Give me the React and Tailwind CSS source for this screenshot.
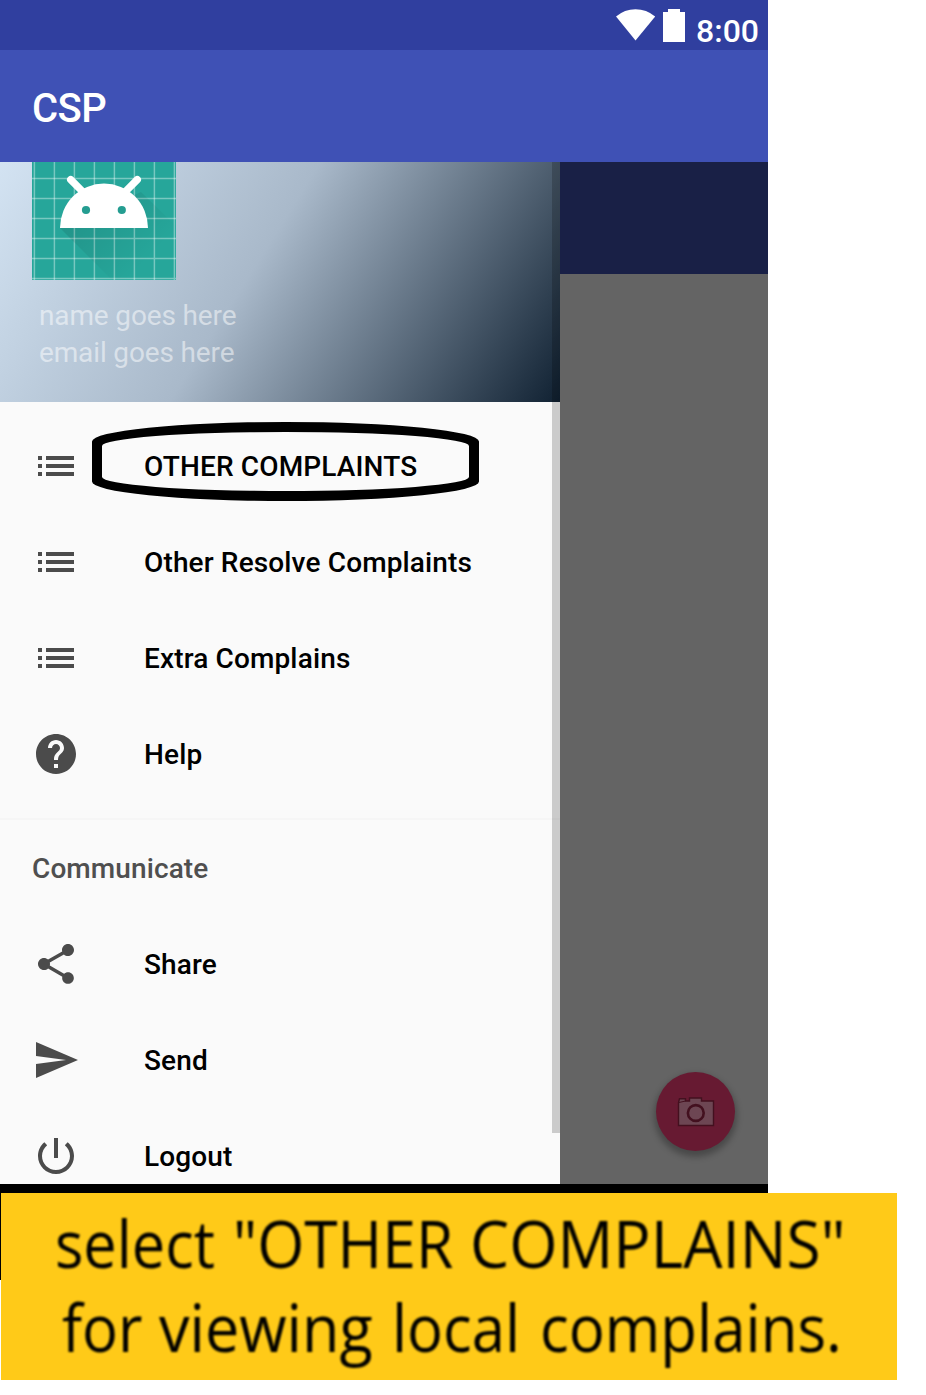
import React from "react";

const ICONS = {
  list: "M3 13h2v-2H3v2zm0 4h2v-2H3v2zm0-8h2V7H3v2zm4 4h14v-2H7v2zm0 4h14v-2H7v2zM7 7v2h14V7H7z",
  help: "M12 2C6.48 2 2 6.48 2 12s4.48 10 10 10 10-4.48 10-10S17.52 2 12 2zm1 17h-2v-2h2v2zm2.07-7.75l-.9.92C13.45 12.9 13 13.5 13 15h-2v-.5c0-1.1.45-2.1 1.17-2.83l1.24-1.26c.37-.36.59-.86.59-1.41 0-1.1-.9-2-2-2s-2 .9-2 2H8c0-2.21 1.79-4 4-4s4 1.79 4 4c0 .88-.36 1.68-.93 2.25z",
  share: "M18 16.08c-.76 0-1.44.3-1.96.77L8.91 12.7c.05-.23.09-.46.09-.7s-.04-.47-.09-.7l7.05-4.11c.54.5 1.25.81 2.04.81 1.66 0 3-1.34 3-3s-1.34-3-3-3-3 1.34-3 3c0 .24.04.47.09.7L8.04 9.81C7.5 9.31 6.79 9 6 9c-1.66 0-3 1.34-3 3s1.34 3 3 3c.79 0 1.5-.31 2.04-.81l7.12 4.16c-.05.21-.08.43-.08.65 0 1.61 1.31 2.92 2.92 2.92 1.61 0 2.92-1.31 2.92-2.92s-1.31-2.92-2.92-2.92z",
  send: "M2.01 21L23 12 2.01 3 2 10l15 2-15 2z",
  power: "M13 3h-2v10h2V3zm4.83 2.17l-1.42 1.42C17.99 7.86 19 9.81 19 12c0 3.87-3.13 7-7 7s-7-3.13-7-7c0-2.19 1.01-4.14 2.58-5.42L6.17 5.17C4.23 6.82 3 9.26 3 12c0 4.97 4.03 9 9 9s9-4.03 9-9c0-2.74-1.23-5.18-3.17-6.83z",
};

function MenuItem({ icon, label, highlighted }) {
  return (
    <li className="relative flex h-24 shrink-0 items-center gap-16 pl-8">
      <svg viewBox="0 0 24 24" className="size-12 fill-[#4b4b4b]">
        <path d={ICONS[icon]} />
      </svg>
      <span className="pt-0.5 text-[28px] leading-8 font-medium tracking-[0.14px] whitespace-nowrap text-black">
        {label}
      </span>
      {highlighted && (
        <svg viewBox="92 422 387 79" className="absolute top-1 left-[92px] h-[79px] w-[387px]">
          <path
            fillRule="evenodd"
            d="M92 441.5A193.5 19.5 0 0 1 479 441.5V481.5A193.5 19.5 0 0 1 92 481.5ZM102 446A183.5 14 0 0 1 469 446V477A183.5 14 0 0 1 102 477Z"
          />
        </svg>
      )}
    </li>
  );
}

function LauncherIcon() {
  const lines = [2.4, 22.4, 42.4, 62.4, 82.4, 102.4, 122.4, 142.4];
  return (
    <svg viewBox="0 0 144 144" className="block size-36">
      <defs>
        <linearGradient id="castShadow" gradientUnits="userSpaceOnUse" x1="50" y1="80" x2="105" y2="135">
          <stop offset="0" stopColor="#000" stopOpacity="0.1" />
          <stop offset="1" stopColor="#000" stopOpacity="0" />
        </linearGradient>
      </defs>
      <rect width="144" height="144" fill="#26a69a" />
      {lines.map((p) => (
        <path key={p} d={`M${p} 0V144M0 ${p}H144`} stroke="#fff" strokeOpacity="0.38" strokeWidth="1.5" />
      ))}
      <path d="M28 92L80 144H144V90L109 56Z" fill="url(#castShadow)" />
      <path d="M28 92A44 44.5 0 0 1 116 92Z" fill="#fff" />
      <path d="M38.700 43.700L52 57M105.300 43.700L92 57" stroke="#fff" strokeWidth="7.4" strokeLinecap="round" />
      <circle cx="54" cy="74" r="4.1" fill="#249d91" />
      <circle cx="89.800" cy="74" r="4.1" fill="#249d91" />
    </svg>
  );
}

function StatusBar() {
  return (
    <div className="flex h-[50px] items-start justify-end bg-[#303f9f] pr-[9px]">
      <svg viewBox="0 0 40 32" className="mt-[9px] mr-[7px] h-8 w-10 fill-white">
        <path d="M0 7.500Q8.500 0.200 19.500 0.200T39.200 7.500L19.500 31.500Z" />
      </svg>
      <svg viewBox="0 0 22 33" className="mt-[9px] mr-[11px] h-[33px] w-[22px] fill-white">
        <path d="M5 0H17V3H22V33H0V3H5Z" />
      </svg>
      <span className="mt-[11px] text-[32px] leading-10 font-medium text-white">8:00</span>
    </div>
  );
}

function Drawer() {
  return (
    <nav className="relative flex h-full w-[560px] flex-col overflow-hidden bg-[#fafafa]">
      <header className="flex h-60 shrink-0 flex-col overflow-hidden bg-[linear-gradient(122.15deg,#dcecfb_0%,#a9b9ca_50%,#102132_100%)] bg-[length:560px_352px] bg-bottom pl-8">
        <div className="-mt-[26px]">
          <LauncherIcon />
        </div>
        <div className="mt-[17px] pl-[7px] text-[28px] leading-[37px] tracking-[-0.14px] text-white/50">
          <p>name goes here</p>
          <p>email goes here</p>
        </div>
      </header>
      <ul className="flex shrink-0 flex-col py-4">
        <MenuItem icon="list" label="OTHER COMPLAINTS" highlighted />
        <MenuItem icon="list" label="Other Resolve Complaints" />
        <MenuItem icon="list" label="Extra Complains" />
        <MenuItem icon="help" label="Help" />
      </ul>
      <div className="h-0.5 shrink-0 bg-[#f6f6f6]" />
      <h2 className="flex h-24 shrink-0 items-center pt-0.5 pl-8 text-[28px] font-medium tracking-[0.1px] text-[#4f4f4f]">
        Communicate
      </h2>
      <ul className="flex shrink-0 flex-col">
        <MenuItem icon="share" label="Share" />
        <MenuItem icon="send" label="Send" />
        <MenuItem icon="power" label="Logout" />
      </ul>
      <div className="absolute top-0 right-0 h-[971px] w-2 bg-black/[0.19]" />
    </nav>
  );
}

function DimmedContent() {
  return (
    <div className="flex h-full w-52 flex-col bg-[#646464]">
      <div className="h-28 bg-[#192046]" />
      <div className="flex flex-1 items-end justify-end pr-[33px] pb-[33px]">
        <button className="flex size-[79px] items-center justify-center rounded-full bg-[#671a32] shadow-[0_4px_6px_2px_rgba(0,0,0,0.28)]">
          <svg viewBox="0 0 38 30" className="h-[30px] w-[38px] fill-[#6d4653] stroke-[#43101f]">
            <path d="M1.500 5.500L2.500 1.800H8.500V4H12.500V1H24.500V4H36.500V28.500H1.500Z" strokeWidth="1.4" />
            <path d="M2 5.500L8.500 4" strokeWidth="1" />
            <circle cx="18.800" cy="16" r="7.900" strokeWidth="2.600" />
          </svg>
        </button>
      </div>
    </div>
  );
}

function Caption() {
  return (
    <div className="h-[187px] w-[896px] overflow-hidden bg-[#ffca18] pt-[9px] font-['Open_Sans',sans-serif] text-[65px] leading-[83px] whitespace-nowrap text-black">
      <p className="flex pl-[54px] blur-[0.8px]">
        <span className="w-[178px] origin-left scale-x-[0.915]">select </span>
        <span className="w-[237px] origin-left scale-x-[0.932]">"OTHER </span>
        <span className="origin-left scale-x-[0.956]">COMPLAINS"</span>
      </p>
      <p className="mt-px flex pl-[61px] blur-[0.8px]">
        <span className="w-[97px] origin-left scale-x-[0.92]">for </span>
        <span className="w-[233px] origin-left scale-x-[0.940]">viewing </span>
        <span className="w-[148px] origin-left scale-x-[0.92]">local </span>
        <span className="origin-left scale-x-[0.923]">complains.</span>
      </p>
    </div>
  );
}

export default function App() {
  return (
    <div className="h-[1395px] w-[926px] overflow-hidden bg-white font-['Roboto',sans-serif]">
      <main className="w-[768px]">
        <StatusBar />
        <div className="flex h-28 items-center bg-[#3f51b5] pt-1.5 pl-8">
          <h1 className="text-[40px] leading-none font-medium tracking-[-0.5px] text-white">CSP</h1>
        </div>
        <div className="flex h-[1022px]">
          <Drawer />
          <DimmedContent />
        </div>
        <div className="h-[9px] bg-black" />
      </main>
      <div className="flex">
        <div className="h-[87px] w-px bg-black" />
        <Caption />
      </div>
    </div>
  );
}
